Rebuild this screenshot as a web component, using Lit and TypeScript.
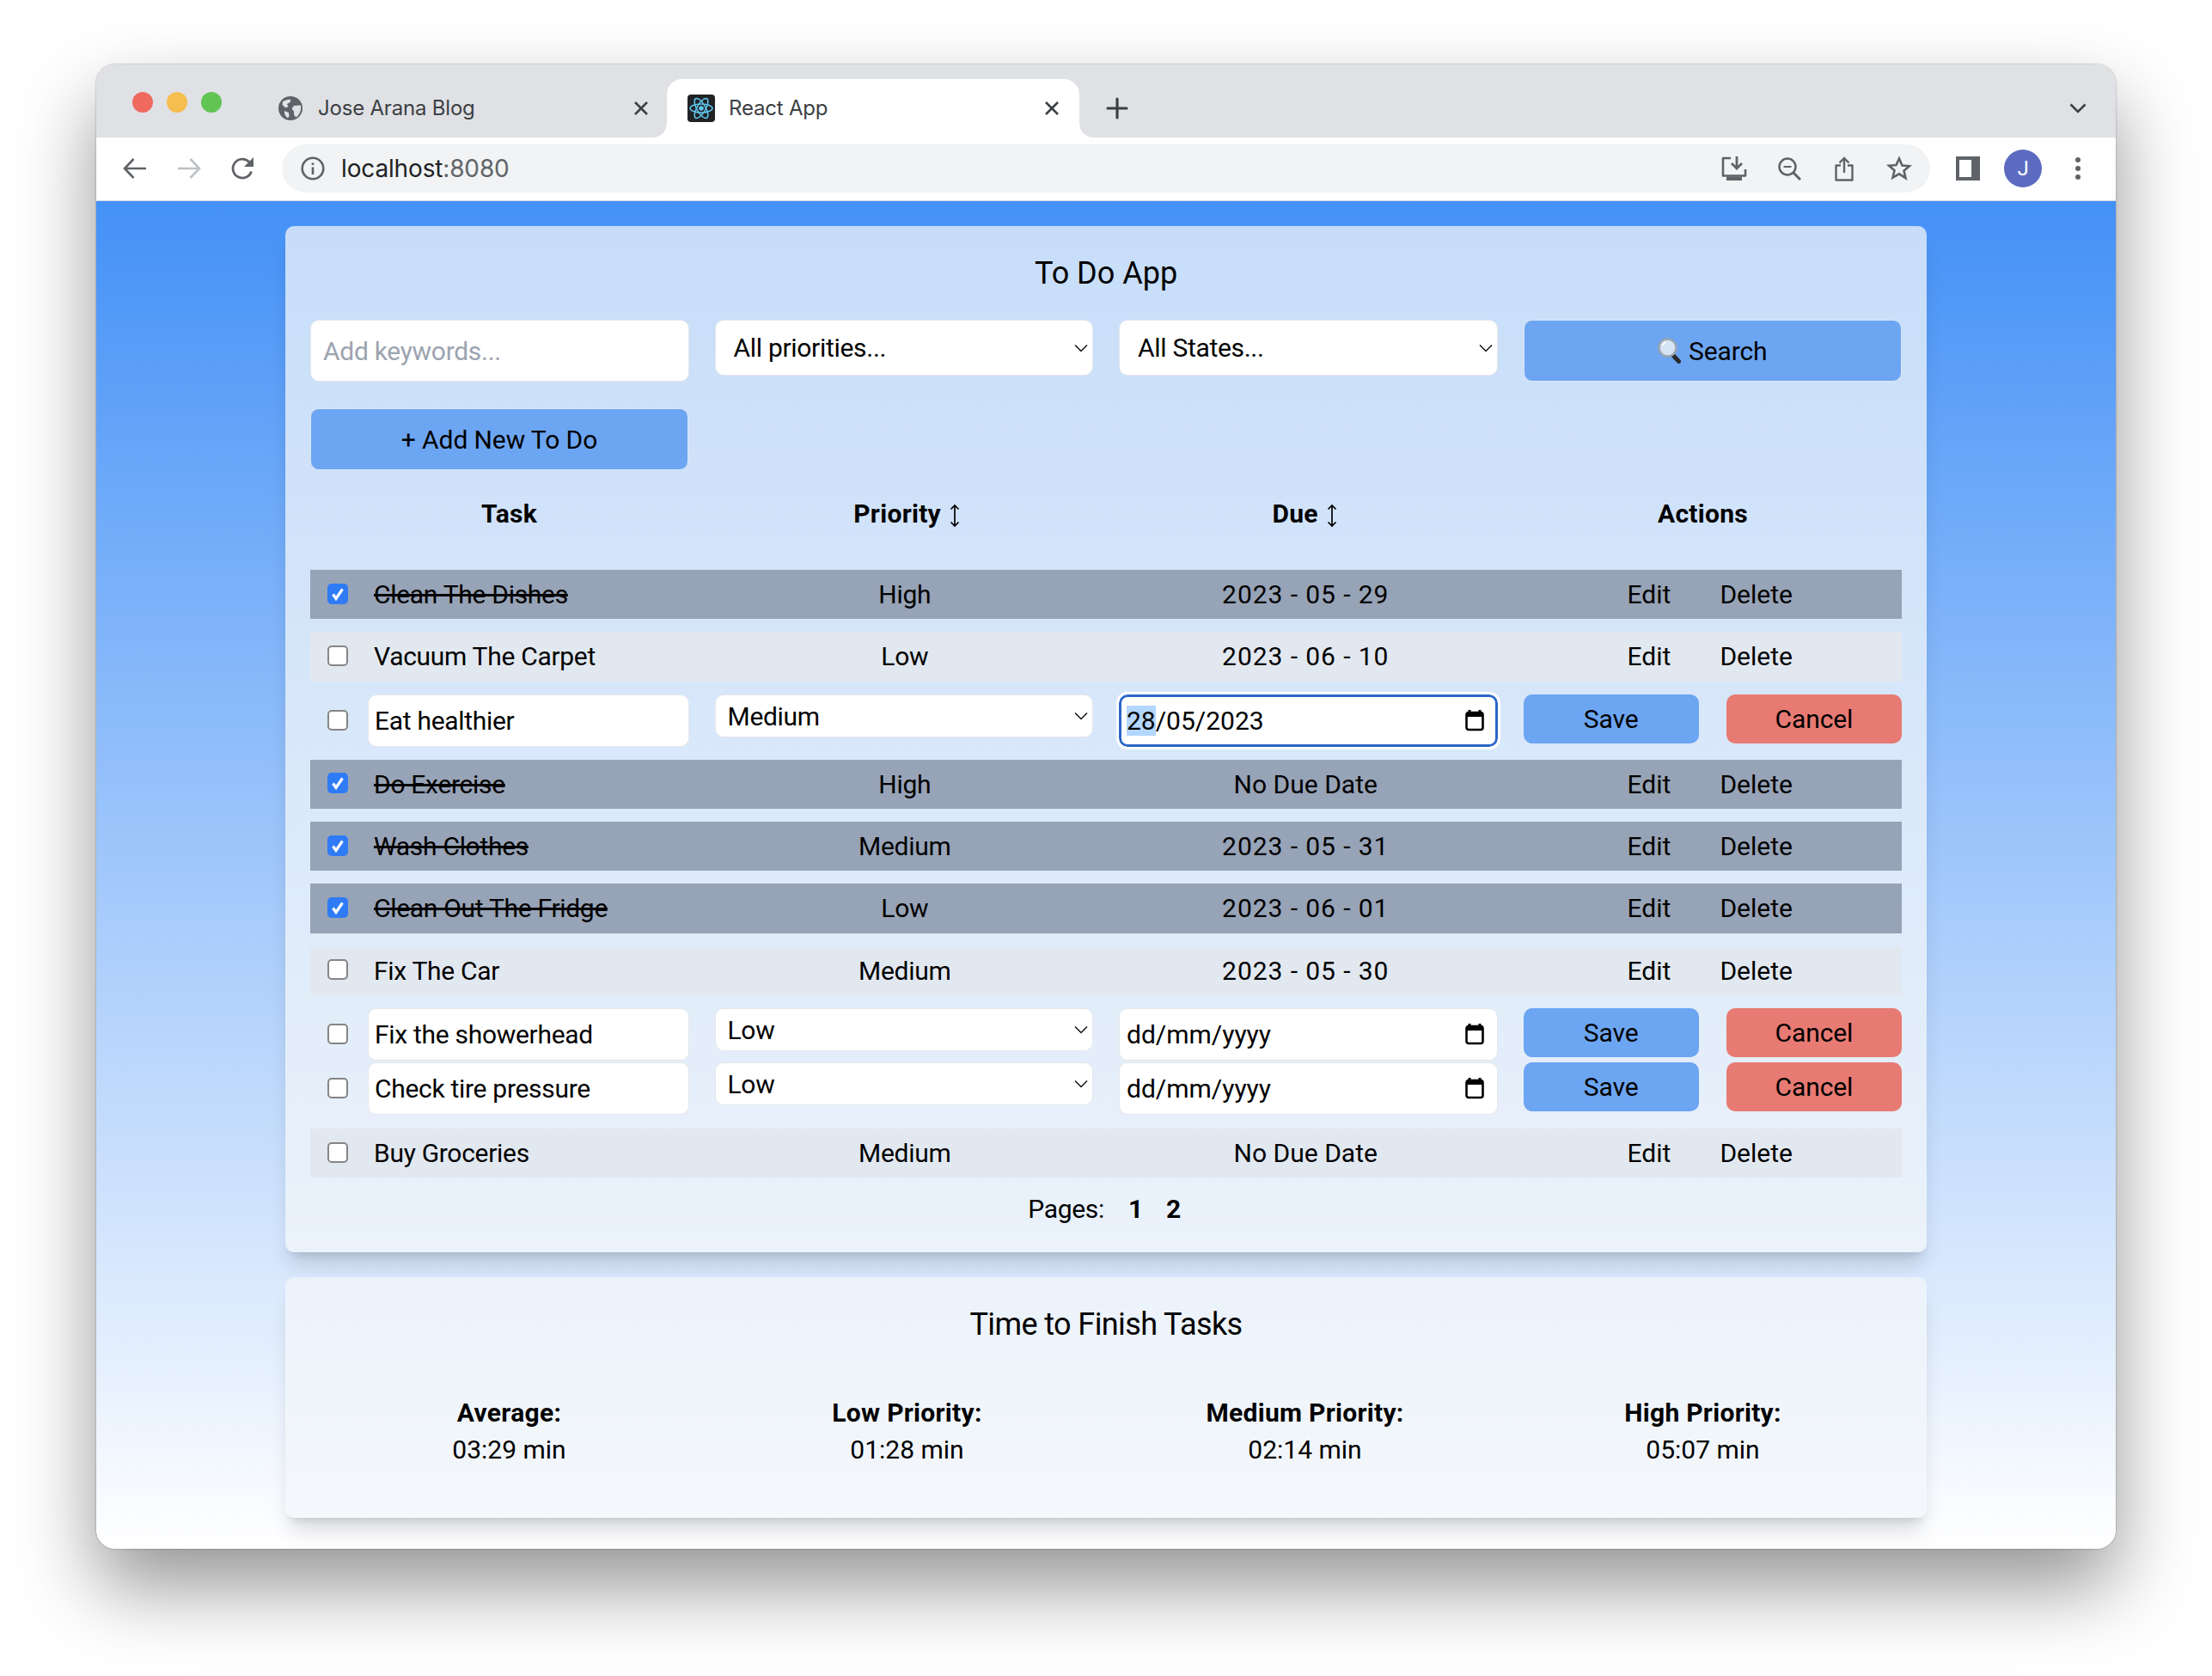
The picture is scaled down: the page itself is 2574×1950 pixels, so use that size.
import { LitElement, html, css, svg } from 'lit';
import { customElement } from 'lit/decorators.js';

type Shown = { kind: 'show'; task: string; priority: string; due: string; done: boolean };
type Edited = { kind: 'edit'; task: string; priority: string; due: string; focused?: boolean };
type Row = Shown | Edited;

const ROWS: Row[] = [
  { kind: 'show', task: 'Clean The Dishes', priority: 'High', due: '2023 - 05 - 29', done: true },
  { kind: 'show', task: 'Vacuum The Carpet', priority: 'Low', due: '2023 - 06 - 10', done: false },
  { kind: 'edit', task: 'Eat healthier', priority: 'Medium', due: '28/05/2023', focused: true },
  { kind: 'show', task: 'Do Exercise', priority: 'High', due: 'No Due Date', done: true },
  { kind: 'show', task: 'Wash Clothes', priority: 'Medium', due: '2023 - 05 - 31', done: true },
  { kind: 'show', task: 'Clean Out The Fridge', priority: 'Low', due: '2023 - 06 - 01', done: true },
  { kind: 'show', task: 'Fix The Car', priority: 'Medium', due: '2023 - 05 - 30', done: false },
  { kind: 'edit', task: 'Fix the showerhead', priority: 'Low', due: 'dd/mm/yyyy' },
  { kind: 'edit', task: 'Check tire pressure', priority: 'Low', due: 'dd/mm/yyyy' },
  { kind: 'show', task: 'Buy Groceries', priority: 'Medium', due: 'No Due Date', done: false },
];

const STATS = [
  ['Average:', '03:29 min'],
  ['Low Priority:', '01:28 min'],
  ['Medium Priority:', '02:14 min'],
  ['High Priority:', '05:07 min'],
];

const chevron = svg`<svg class="chev" width="16" height="10" viewBox="0 0 16 10"><path d="M1 1.500 8 8.500l7-7" fill="none" stroke="#111" stroke-width="1.500"/></svg>`;
const sortArrow = svg`<svg class="sort" width="14" height="28" viewBox="0 0 14 28"><path d="M7 2v24M2.500 6.500 7 2l4.500 4.500M2.500 21.500 7 26l4.500-4.500" fill="none" stroke="#000" stroke-width="1.700"/></svg>`;
const calendar = svg`<svg class="cal" width="22" height="26" viewBox="0 0 22 26"><path d="M5 1v4M17 1v4" stroke="#000" stroke-width="3"/><rect x="1.500" y="4" width="19" height="20" rx="2.500" fill="none" stroke="#000" stroke-width="2.600"/><rect x="1.500" y="4" width="19" height="5" fill="#000"/></svg>`;
const tick = svg`<svg width="24" height="24" viewBox="0 0 24 24"><path d="M6.500 12.500 10 17.500 17.500 6.500" fill="none" stroke="#fff" stroke-width="3.200"/></svg>`;
const tabClose = svg`<svg width="18" height="18" viewBox="0 0 18 18"><path d="M2 2l14 14M16 2 2 16" stroke="#3c4043" stroke-width="2.600"/></svg>`;

const globe = svg`<svg width="28" height="28" viewBox="0 0 28 28"><circle cx="14" cy="14" r="14" fill="#5f6368"/><path d="M5 6.500c3-2 6-3 9.500-2.500l-1 3-3.500 2 1.500 3-3 1.500-4-3.500zM26 10.500l-8 .5-2.500 3.500 2.500 3v4l2.500 3c3.500-2.500 6.500-7.500 5.500-14zM7 17l5 2 .5 5-2.500 1c-2-2-3.500-5-3-8z" fill="#dfe1e5"/></svg>`;
const reactLogo = svg`<svg width="32" height="32" viewBox="0 0 32 32"><rect width="32" height="32" rx="4" fill="#202226"/><g fill="none" stroke="#61c8ee" stroke-width="1.500"><ellipse cx="16" cy="16" rx="13" ry="5"/><ellipse cx="16" cy="16" rx="13" ry="5" transform="rotate(60 16 16)"/><ellipse cx="16" cy="16" rx="13" ry="5" transform="rotate(120 16 16)"/></g><circle cx="16" cy="16" r="2.800" fill="#61c8ee"/></svg>`;

const back = svg`<svg width="32" height="32" viewBox="0 0 32 32"><path d="M29 16H5M14.500 5 4 16l10.500 11" fill="none" stroke="#5f6368" stroke-width="2.600"/></svg>`;
const forward = svg`<svg width="32" height="32" viewBox="0 0 32 32"><path d="M3 16h24M17.500 5 28 16 17.500 27" fill="none" stroke="#bdc1c6" stroke-width="2.600"/></svg>`;
const reload = svg`<svg width="32" height="32" viewBox="0 0 32 32"><path d="M25.500 19.500A11 11 0 1 1 23 8.500" fill="none" stroke="#5f6368" stroke-width="2.800"/><path d="M28 3v11H17z" fill="#5f6368"/></svg>`;
const info = svg`<svg width="28" height="28" viewBox="0 0 28 28"><circle cx="14" cy="14" r="12.300" fill="none" stroke="#5f6368" stroke-width="2.600"/><path d="M12.700 12.500h2.600V21h-2.600zM12.700 7.500h2.600V10h-2.600z" fill="#5f6368"/></svg>`;
const install = svg`<svg width="30" height="28" viewBox="0 0 30 28"><path d="M11 2H2v20.500h26V15" fill="none" stroke="#5f6368" stroke-width="2.600" stroke-linejoin="round"/><path d="M18 0v13M12 8l6 6 6-6" fill="none" stroke="#5f6368" stroke-width="2.800"/><path d="M6 23.500h18V28H6z" fill="#5f6368"/></svg>`;
const zoomOut = svg`<svg width="27" height="27" viewBox="0 0 27 27"><circle cx="11" cy="11" r="9.500" fill="none" stroke="#5f6368" stroke-width="2.500"/><path d="M6.500 11h9" stroke="#5f6368" stroke-width="2.200"/><path d="M17.500 17.500 26 26" stroke="#5f6368" stroke-width="3"/></svg>`;
const share = svg`<svg width="22" height="29" viewBox="0 0 22 29"><path d="M7 10.500H1.500v17h19v-17H15" fill="none" stroke="#5f6368" stroke-width="2.400" stroke-linejoin="round"/><path d="M11 19V2M5.500 7.500 11 2l5.500 5.500" fill="none" stroke="#5f6368" stroke-width="2.400"/></svg>`;
const star = svg`<svg width="30" height="30" viewBox="0 0 30 30"><path d="M15 3.500l3.500 8 8.500.7-6.500 5.600 2 8.400L15 21.300 7.500 25.700l2-8.400L3 11.700l8.500-.7z" fill="none" stroke="#5f6368" stroke-width="2.600"/></svg>`;
const panel = svg`<svg width="28" height="28" viewBox="0 0 28 28"><rect width="28" height="28" fill="#5f6368"/><rect x="4" y="4" width="14" height="20" fill="#fff"/></svg>`;
const dots = svg`<svg width="8" height="26" viewBox="0 0 8 26"><circle cx="4" cy="3" r="3" fill="#5f6368"/><circle cx="4" cy="13" r="3" fill="#5f6368"/><circle cx="4" cy="23" r="3" fill="#5f6368"/></svg>`;
const plus = svg`<svg width="26" height="26" viewBox="0 0 26 26"><path d="M13 2v22M2 13h22" stroke="#3c4043" stroke-width="3.200" stroke-linecap="round"/></svg>`;
const strip = svg`<svg width="20" height="12" viewBox="0 0 20 12"><path d="M1.500 1.500 10 10l8.500-8.500" fill="none" stroke="#3c4043" stroke-width="2.600"/></svg>`;
const loupe = svg`<svg width="28" height="30" viewBox="0 0 28 30"><path d="M18 20.500l6.500 7" stroke="#2b2b2b" stroke-width="5" stroke-linecap="round"/><circle cx="11.500" cy="11.500" r="10" fill="#d6e3f2" stroke="#9aa6b2" stroke-width="2.400"/><path d="M5.500 9a6.500 6.500 0 0 1 4-4" fill="none" stroke="#fff" stroke-width="2"/></svg>`;

@customElement('app-root')
export class AppRoot extends LitElement {
  static styles = css`
    :host {
      display: block;
      font-family: Roboto, "Liberation Sans", sans-serif;
      color: #000;
    }
    .page {
      box-sizing: border-box;
      width: 2574px;
      height: 1950px;
      padding: 75px 112px 0;
      background: #fff;
    }
    .window {
      width: 2350px;
      height: 1727px;
      border-radius: 22px;
      overflow: hidden;
      display: flex;
      flex-direction: column;
      box-shadow: 0 0 2px rgba(0, 0, 0, 0.45), 0 44px 90px rgba(0, 0, 0, 0.42);
    }

    /* browser chrome */
    .strip {
      height: 85px;
      flex: none;
      background: #dfe1e5;
      display: flex;
      align-items: flex-end;
      font-family: Inter, sans-serif;
      font-size: 24px;
      letter-spacing: -0.2px;
      color: #3c4043;
    }
    .lights {
      display: flex;
      gap: 16px;
      margin-left: 42px;
      width: 150px;
      align-self: flex-start;
      margin-top: 32px;
    }
    .lights i {
      width: 24px;
      height: 24px;
      border-radius: 50%;
    }
    .tab {
      box-sizing: border-box;
      height: 68px;
      display: flex;
      align-items: center;
      gap: 18px;
    }
    .tab.idle {
      width: 472px;
      padding: 0 21px 0 20px;
    }
    .tab.on {
      position: relative;
      width: 480px;
      padding: 0 23px 0 24px;
      background: #fff;
      border-radius: 18px 18px 0 0;
      gap: 16px;
    }
    .tab.on::before,
    .tab.on::after {
      content: "";
      position: absolute;
      bottom: 0;
      width: 16px;
      height: 16px;
    }
    .tab.on::before {
      left: -16px;
      background: radial-gradient(circle at 0 0, #dfe1e5 15.500px, #fff 16px);
    }
    .tab.on::after {
      right: -16px;
      background: radial-gradient(circle at 100% 0, #dfe1e5 15.500px, #fff 16px);
    }
    .tab .name {
      flex: 1;
      padding-bottom: 2px;
    }
    .tab svg {
      display: block;
      flex: none;
    }
    .new {
      margin-left: 31px;
      height: 68px;
      display: flex;
      align-items: center;
    }
    .grow {
      flex: 1;
    }
    .more {
      height: 68px;
      display: flex;
      align-items: center;
      margin-right: 34px;
    }
    .bar {
      box-sizing: border-box;
      height: 74px;
      flex: none;
      background: #fff;
      border-bottom: 1px solid #dadce0;
      display: flex;
      align-items: flex-start;
      padding: 8px 0 0 27px;
    }
    .bar svg {
      display: block;
    }
    .nav {
      box-sizing: border-box;
      width: 63px;
      height: 56px;
      padding-left: 2px;
      display: flex;
      align-items: center;
    }
    .omni {
      box-sizing: border-box;
      width: 1918px;
      height: 56px;
      flex: none;
      border-radius: 28px;
      background: #f1f3f4;
      display: flex;
      align-items: center;
      padding: 0 4px 0 22px;
      font-family: Inter, sans-serif;
      font-size: 28px;
      letter-spacing: -0.15px;
      color: #5f6368;
    }
    .omni b {
      font-weight: 400;
      color: #202124;
    }
    .omni .url {
      margin-left: 19px;
      flex: 1;
    }
    .slot {
      width: 64px;
      display: flex;
      justify-content: center;
    }
    .bar .slot {
      height: 56px;
      align-items: center;
    }
    .tools {
      display: flex;
      align-items: center;
      height: 56px;
    }
    .tools.side {
      margin-left: 12px;
    }
    .avatar {
      width: 44px;
      height: 44px;
      margin-left: 10px;
      margin-right: 38px;
      border-radius: 50%;
      background: #5c6bc0;
      color: #fff;
      font-family: Roboto, sans-serif;
      font-size: 24px;
      display: flex;
      align-items: center;
      justify-content: center;
    }

    /* the app */
    .content {
      flex: 1;
      background: linear-gradient(180deg, #4491f7 0%, #ffffff 100%);
      padding-top: 29px;
      display: flex;
      flex-direction: column;
      align-items: center;
      gap: 29px;
      font-size: 30px;
      letter-spacing: -0.3px;
    }
    .card {
      box-sizing: border-box;
      width: 1910px;
      padding: 0 29px;
      border-radius: 10px;
      background: rgba(241, 245, 249, 0.75);
      box-shadow: 0 20px 25px -5px rgba(0, 0, 0, 0.13), 0 8px 10px -6px rgba(0, 0, 0, 0.13);
    }
    .card.main {
      height: 1194px;
    }
    .card.stats {
      height: 280px;
    }
    h1 {
      margin: 0;
      font-size: 36px;
      font-weight: 400;
      text-align: center;
      line-height: 44px;
      padding-top: 33px;
      letter-spacing: 0;
    }
    .stats h1 {
      letter-spacing: -0.6px;
    }
    .filters {
      display: grid;
      grid-template-columns: repeat(4, 1fr);
      gap: 30px;
      margin-top: 32px;
      align-items: start;
    }
    .box {
      box-sizing: border-box;
      background: #fff;
      border: 1px solid #e5e7eb;
      border-radius: 10px;
      display: flex;
      align-items: center;
    }
    .hint {
      height: 72px;
      padding: 0 14px;
      color: #9ca3af;
    }
    .pick {
      height: 65px;
      padding: 0 5px 0 21px;
      justify-content: space-between;
    }
    .pick.small {
      height: 50px;
      padding-left: 14px;
    }
    .pick.small span {
      padding-top: 2px;
    }
    .btn {
      box-sizing: border-box;
      height: 72px;
      border: 1px solid #dbe6f5;
      border-radius: 10px;
      background: #6ca5f2;
      display: flex;
      align-items: center;
      justify-content: center;
      gap: 8px;
      letter-spacing: -0.1px;
    }
    .btn.small {
      height: 57px;
      border: none;
    }
    .btn.stop {
      background: #e77a73;
    }
    .add {
      width: 440px;
      margin-top: 31px;
    }
    .heads,
    .facts {
      display: grid;
      grid-template-columns: repeat(4, 1fr);
      text-align: center;
    }
    .heads {
      margin-top: 32px;
      height: 38px;
      line-height: 38px;
      font-weight: 700;
      letter-spacing: 0.3px;
    }
    .heads svg {
      vertical-align: -6px;
      margin-left: 1px;
    }
    .rows {
      margin-top: 46px;
    }
    .row {
      display: grid;
      grid-template-columns: repeat(4, 1fr);
      gap: 30px;
      align-items: center;
    }
    .row.show {
      height: 57.330px;
      margin: 15px 0;
      text-align: center;
      background: #e2e8f0;
    }
    .row.show.done {
      background: #97a3b6;
    }
    .row.edit {
      height: 61px;
      margin-bottom: 2px;
      align-items: start;
    }
    .row.edit + .row.edit + .row.show {
      margin-top: 16px;
    }
    .rows > :first-child {
      margin-top: 0;
    }
    .who {
      display: flex;
      align-items: center;
      text-align: left;
      padding-left: 20px;
    }
    .row.edit .who {
      height: 61px;
    }
    .done .who span {
      text-decoration: line-through;
    }
    .tickbox {
      box-sizing: border-box;
      flex: none;
      width: 24px;
      height: 24px;
      margin-right: 30px;
      border-radius: 5px;
      background: #fff;
      border: 2px solid #858585;
    }
    .row.show .tickbox {
      margin-top: -2px;
    }
    .tickbox.on {
      background: #2f7bf6;
      border: none;
    }
    .tickbox svg {
      display: block;
    }
    .row.edit .tickbox {
      margin-right: 23px;
    }
    .name-box {
      box-sizing: border-box;
      flex: 1;
      height: 61px;
      padding-left: 7px;
      background: #fff;
      border-radius: 10px;
    }
    .prio {
      padding-left: 2px;
    }
    .due {
      padding-right: 6px;
      letter-spacing: 0;
    }
    .due.stamp {
      letter-spacing: 0.93px;
    }
    .date {
      height: 61px;
      padding: 0 15px 0 8px;
      justify-content: space-between;
      letter-spacing: 0;
    }
    .date.focus {
      border: 3px solid #2b66c9;
      outline: 3px solid #fff;
      padding: 0 13px 0 6px;
    }
    .sel {
      background: #b3d7fe;
    }
    .acts {
      display: flex;
      justify-content: center;
      gap: 57px;
      padding-right: 6px;
      letter-spacing: 0;
    }
    .pair {
      display: grid;
      grid-template-columns: 1fr 1fr;
      gap: 32px;
    }
    .pages {
      display: flex;
      justify-content: center;
      margin-top: 5px;
      line-height: 44px;
      padding-right: 4px;
    }
    .pages b {
      margin-left: 28px;
    }
    .pages b + b {
      margin-left: 27px;
    }
    .facts {
      margin-top: 61px;
      letter-spacing: 0;
    }
    .facts b {
      display: block;
      line-height: 40px;
      letter-spacing: 0.3px;
    }
    .facts span {
      display: block;
      margin-top: 3px;
      line-height: 40px;
    }
  `;

  renderShown(r: Shown) {
    return html`
      <div class="row show ${r.done ? 'done' : ''}">
        <div class="who">
          <div class="tickbox ${r.done ? 'on' : ''}">${r.done ? tick : ''}</div>
          <span>${r.task}</span>
        </div>
        <div class="prio">${r.priority}</div>
        <div class="due ${r.due.startsWith('2023') ? 'stamp' : ''}">${r.due}</div>
        <div class="acts"><span>Edit</span><span>Delete</span></div>
      </div>
    `;
  }

  renderEdited(r: Edited) {
    return html`
      <div class="row edit">
        <div class="who">
          <div class="tickbox"></div>
          <div class="box name-box">${r.task}</div>
        </div>
        <div class="box pick small"><span>${r.priority}</span>${chevron}</div>
        <div class="box date ${r.focused ? 'focus' : ''}">
          <span>${r.focused ? html`<span class="sel">28</span>/05/2023` : r.due}</span>
          ${calendar}
        </div>
        <div class="pair">
          <div class="btn small">Save</div>
          <div class="btn small stop">Cancel</div>
        </div>
      </div>
    `;
  }

  render() {
    return html`
      <div class="page">
        <div class="window">
          <div class="strip">
            <div class="lights">
              <i style="background:#f0695f"></i>
              <i style="background:#f6bd4f"></i>
              <i style="background:#61c554"></i>
            </div>
            <div class="tab idle">${globe}<span class="name">Jose Arana Blog</span>${tabClose}</div>
            <div class="tab on">${reactLogo}<span class="name">React App</span>${tabClose}</div>
            <div class="new">${plus}</div>
            <div class="grow"></div>
            <div class="more">${strip}</div>
          </div>
          <div class="bar">
            <div class="nav">${back}</div>
            <div class="nav">${forward}</div>
            <div class="nav">${reload}</div>
            <div class="omni">
              ${info}
              <span class="url"><b>localhost</b>:8080</span>
              <div class="tools">
                <div class="slot">${install}</div>
                <div class="slot">${zoomOut}</div>
                <div class="slot">${share}</div>
                <div class="slot">${star}</div>
              </div>
            </div>
            <div class="tools side">
              <div class="slot">${panel}</div>
              <div class="avatar">J</div>
              ${dots}
            </div>
          </div>
          <div class="content">
            <section class="card main">
              <h1>To Do App</h1>
              <div class="filters">
                <div class="box hint">Add keywords...</div>
                <div class="box pick"><span>All priorities...</span>${chevron}</div>
                <div class="box pick"><span>All States...</span>${chevron}</div>
                <div class="btn">${loupe}<span>Search</span></div>
              </div>
              <div class="btn add">+ Add New To Do</div>
              <div class="heads">
                <div>Task</div>
                <div>Priority ${sortArrow}</div>
                <div>Due ${sortArrow}</div>
                <div>Actions</div>
              </div>
              <div class="rows">
                ${ROWS.map((r) => (r.kind === 'show' ? this.renderShown(r) : this.renderEdited(r)))}
              </div>
              <div class="pages"><span>Pages:</span><b>1</b><b>2</b></div>
            </section>
            <section class="card stats">
              <h1>Time to Finish Tasks</h1>
              <div class="facts">
                ${STATS.map(([k, v]) => html`<div><b>${k}</b><span>${v}</span></div>`)}
              </div>
            </section>
          </div>
        </div>
      </div>
    `;
  }
}
